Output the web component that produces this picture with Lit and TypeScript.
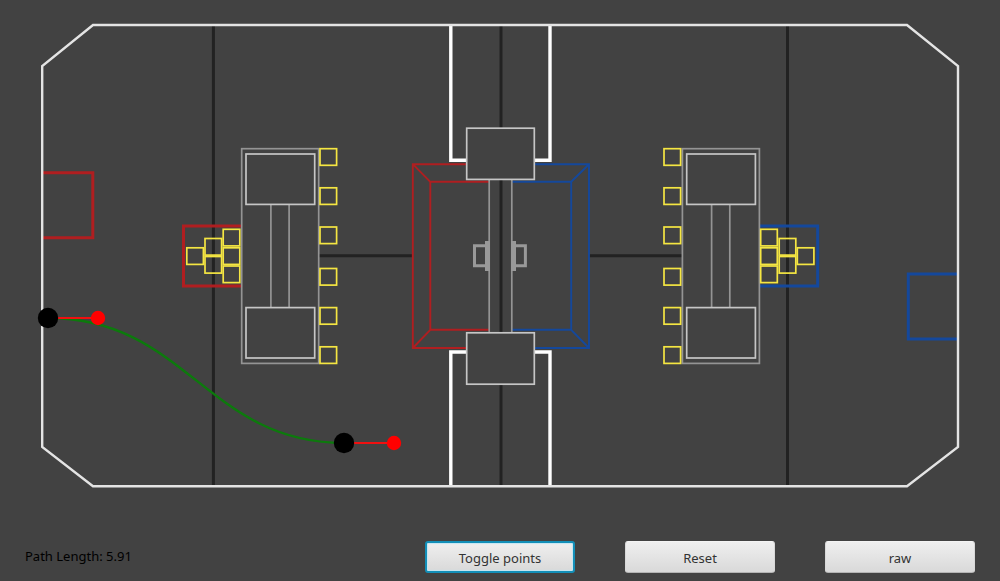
import { LitElement, css, html, svg } from "lit";
import { customElement, state } from "lit/decorators.js";

interface Point {
  x: number;
  y: number;
}

interface Waypoint {
  anchor: Point;
  handle: Point;
}

const CUBE = 16.6;
const CUBE_ROWS = [148.7, 187.8, 227, 268.5, 307.6, 346.8];
const PYRAMID = [
  { col: 0, y: 247.8 },
  { col: 1, y: 238.5 },
  { col: 1, y: 256.5 },
  { col: 2, y: 229.3 },
  { col: 2, y: 247.8 },
  { col: 2, y: 266 },
];
const PYRAMID_LEFT = [186.8, 205, 223.2];
const PYRAMID_RIGHT = [797.3, 779.2, 760.7];

const WAYPOINTS: Waypoint[] = [
  { anchor: { x: 48, y: 318 }, handle: { x: 98, y: 318 } },
  { anchor: { x: 344, y: 443 }, handle: { x: 394, y: 443 } },
];

@customElement("field-map")
export class FieldMap extends LitElement {
  static properties = { showPoints: { type: Boolean } };
  declare showPoints: boolean;

  static styles = css`
    :host {
      display: block;
    }
    .field {
      display: block;
      width: 100%;
      height: auto;
    }
    .field * {
      fill: none;
    }
    .wall {
      stroke: #e4e4e4;
      stroke-width: 2.4;
    }
    .tape {
      stroke: #222;
      stroke-width: 3;
    }
    .zone {
      stroke: #fff;
      stroke-width: 3.4;
    }
    .red {
      stroke: #b01e20;
      stroke-width: 3;
    }
    .blue {
      stroke: #14489c;
      stroke-width: 3;
    }
    .thin {
      stroke-width: 1.9;
    }
    .frame {
      stroke: #949494;
      stroke-width: 1.7;
    }
    .field .plate {
      fill: #424242;
      stroke: #c6c6c6;
      stroke-width: 1.7;
    }
    .field .block {
      fill: #999;
    }
    .bracket {
      stroke: #999;
      stroke-width: 3;
    }
    .cube {
      stroke: #f5e642;
      stroke-width: 1.7;
    }
    .curve {
      stroke: #0c7a0c;
      stroke-width: 2.4;
    }
    .arm {
      stroke: #f01010;
      stroke-width: 2.2;
    }
    .field .anchor {
      fill: #000;
    }
    .field .handle {
      fill: #f00;
    }
  `;

  private cube(x: number, y: number) {
    return svg`<rect class="cube" x=${x} y=${y} width=${CUBE} height=${CUBE} />`;
  }

  private switchFrame(x: number) {
    return svg`
      <rect class="frame" x=${x} y="148.7" width="77" height="214.7" />
      <path class="frame" d="M${x + 29.2} 204V308M${x + 47.4} 204V308" />
      <rect class="plate" x=${x + 4.3} y="154" width="68.7" height="50.4" />
      <rect class="plate" x=${x + 4.3} y="307.6" width="68.7" height="50.4" />
    `;
  }

  private points() {
    return WAYPOINTS.map(
      ({ anchor, handle }) => svg`
        <path class="arm" d="M${anchor.x} ${anchor.y}L${handle.x} ${handle.y}" />
        <circle class="anchor" cx=${anchor.x} cy=${anchor.y} r="10.2" />
        <circle class="handle" cx=${handle.x} cy=${handle.y} r="7.2" />
      `
    );
  }

  render() {
    return html`
      <svg class="field" viewBox="0 0 1000 512" role="img" aria-label="Field with driving path">
        <path class="tape" d="M213.4 25V486M501 25V486M787.5 25V486M319 255.8H412M589 255.8H682" />
        <path class="red" d="M42 172.8H92.8V237.7H42M241 226H183.5V286H241" />
        <path class="blue" d="M958 274H908.3V339H958M760 226H817.7V286H760" />
        <path class="red thin" d="M489 164.2H412.8V348H489M489 181.8H430.3V329.8H489M412.8 164.2L430.3 181.8M412.8 348L430.3 329.8" />
        <path class="blue thin" d="M512 164.2H589V348H512M512 181.8H571.2V329.8H512M589 164.2L571.2 181.8M589 348L571.2 329.8" />
        <path class="zone" d="M450.8 25V160.2H550V25M450.8 486V352H550V486" />
        <path class="wall" d="M93 25H907L958 66V447L907 486.2H93L42.2 447V66Z" />
        ${this.switchFrame(241.7)} ${this.switchFrame(682.4)}
        <path class="frame" d="M489.2 180V333M511.8 180V333" />
        <path class="block" d="M485 241h5v30h-5zM511 241h5v30h-5z" />
        <path class="bracket" d="M485 245.8H474.5V265.8H485M516 245.8H525.4V265.8H516" />
        <rect class="plate" x="466.7" y="128.2" width="67.6" height="51.2" />
        <rect class="plate" x="466.7" y="332.8" width="67.6" height="51.4" />
        ${CUBE_ROWS.map((y) => [this.cube(320, y), this.cube(664, y)])}
        ${PYRAMID.map(({ col, y }) => [
          this.cube(PYRAMID_LEFT[col], y),
          this.cube(PYRAMID_RIGHT[col], y),
        ])}
        <path class="curve" d="M48 318C186 318 207 443 344 443" />
        ${this.showPoints ? this.points() : null}
      </svg>
    `;
  }
}

@customElement("app-root")
export class AppRoot extends LitElement {
  @state() private showPoints = true;

  static styles = css`
    :host {
      display: block;
      min-height: 100vh;
      background: #424242;
      font-family: "Noto Sans", sans-serif;
      font-size: 13px;
      line-height: 18px;
    }
    .controls {
      display: flex;
      align-items: center;
      gap: 50px;
      padding: 29px 25px 8px;
    }
    .length {
      flex: 1;
      padding-bottom: 2px;
      color: #000;
    }
    .button {
      box-sizing: border-box;
      width: 150px;
      height: 32px;
      padding: 2px 0 0;
      border: 1px solid;
      border-color: #f4f4f4 #d8d8d8 #b4b4b4;
      border-radius: 3px;
      background: linear-gradient(#efefef, #d9d9d9);
      color: #333;
      font: inherit;
    }
    .button.focused {
      border: 2px solid #138fb8;
      padding-top: 1px;
      outline: none;
      box-shadow: inset 0 0 1px 1px #c5e6f2;
    }
  `;

  render() {
    return html`
      <field-map .showPoints=${this.showPoints}></field-map>
      <div class="controls">
        <span class="length">Path Length: 5.91</span>
        <button
          class="button focused"
          type="button"
          @click=${() => (this.showPoints = !this.showPoints)}
        >
          Toggle points
        </button>
        <button class="button" type="button">Reset</button>
        <button class="button" type="button">raw</button>
      </div>
    `;
  }
}
